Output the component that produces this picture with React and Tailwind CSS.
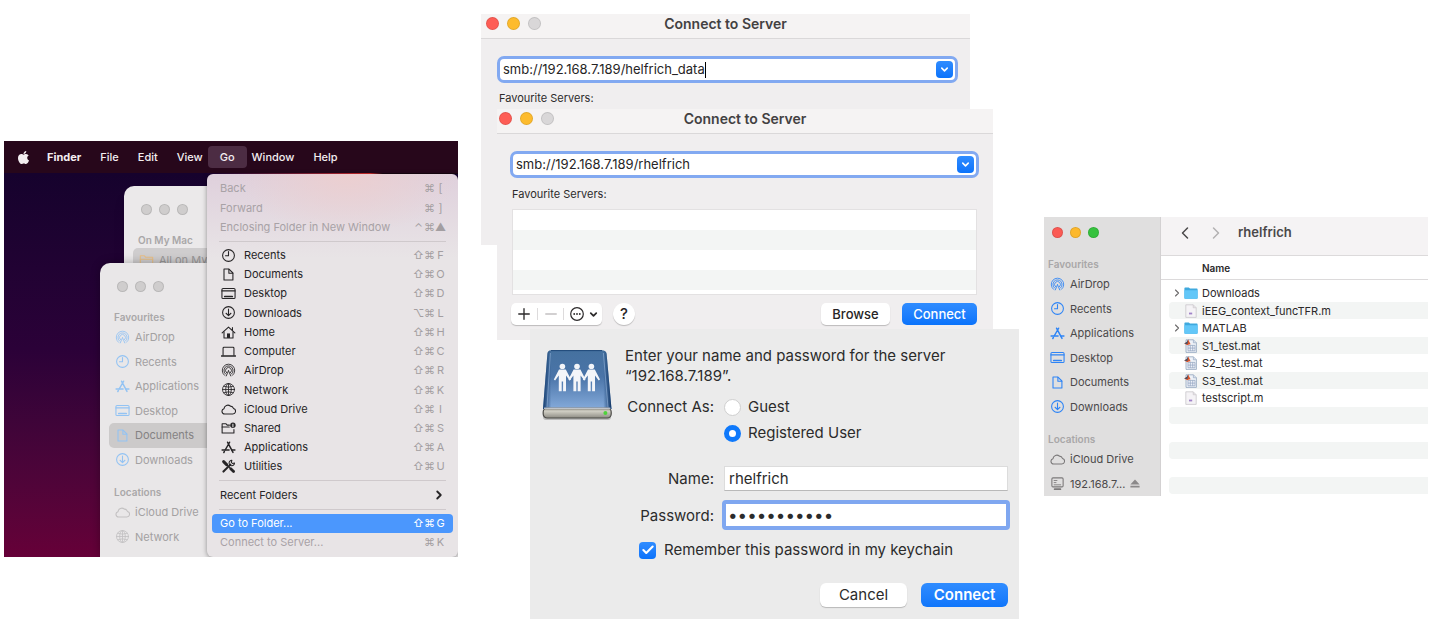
import React from "react";
import { FaApple } from "react-icons/fa";
import { ChevronDown, ChevronRight, ChevronLeft, Check, Plus, Minus } from "lucide-react";

const shapes = {
  recents: (
    <>
      <circle cx="8" cy="8" r="6.3" />
      <path d="M8 3.8V8.2H4.8" />
    </>
  ),
  documents: (
    <>
      <path d="M3.2 2.2h5.3l4.2 4.2v7.4H3.2z" />
      <path d="M8.4 2.4v4.2h4.2" />
    </>
  ),
  desktop: (
    <>
      <rect x="1" y="2.6" width="14" height="10.8" rx="1.2" />
      <path d="M1 5.2h14" />
      <path d="M4 11.2h8" strokeWidth="1.8" />
    </>
  ),
  downloads: (
    <>
      <circle cx="8" cy="8" r="6.3" />
      <path d="M8 4.4v6.8M5.4 8.8 8 11.3l2.6-2.5" />
    </>
  ),
  home: (
    <>
      <path d="M1.2 8.4 8 2.2l6.8 6.2M12.2 5.6V2.8" />
      <path d="M3.2 7.2v6.6h9.6V7.2" />
      <rect x="6.4" y="9" width="3.2" height="4.8" fill="currentColor" stroke="none" />
    </>
  ),
  computer: (
    <>
      <path d="M2.2 12V4.4q0-1 1-1h9.6q1 0 1 1V12" />
      <path d="M.4 12.8h15.2" strokeWidth="1.4" />
    </>
  ),
  airdrop: (
    <g strokeWidth=".9">
      <path d="M3.8 13.2a6.7 6.7 0 1 1 8.4 0" />
      <path d="M4.9 11.8a4.9 4.9 0 1 1 6.2 0" />
      <path d="M5.9 10.4a3.2 3.2 0 1 1 4.2 0" />
      <path d="m8 8.2-2.4 5.6M8 8.2l2.4 5.6" />
    </g>
  ),
  network: (
    <g strokeWidth=".9">
      <circle cx="8" cy="8" r="6.4" />
      <ellipse cx="8" cy="8" rx="3" ry="6.4" />
      <path d="M1.6 8h12.8M8 1.6v12.8M3 4.6q5 2 10 0M3 11.4q5-2 10 0" />
    </g>
  ),
  cloud: (
    <path d="M4 12.8h8.6a3 3 0 0 0 .7-5.9A3.5 3.5 0 0 0 10 4.4a4.1 4.1 0 0 0-6.8 2.7A2.9 2.9 0 0 0 4 12.8z" />
  ),
  shared: (
    <>
      <path d="M9 4.4H6.6L5.4 3H1.2v9.8h12.6V9" />
      <path d="M1.2 6.4h7.6" />
      <circle cx="12.7" cy="4.6" r="2.9" fill="currentColor" stroke="none" />
      <path d="M12.7 3.4v2.8" stroke="#fff" strokeWidth="1" />
    </>
  ),
  applications: (
    <>
      <path d="M7 2.4 8.2 4.6 12.8 13.2M9.2 2.4 4.6 10.4M3.6 12.2 3 13.4" strokeWidth="1.6" />
      <path d="M1.2 10.6h7.4M11.6 10.6h3.2" strokeWidth="1.6" />
    </>
  ),
  utilities: (
    <>
      <path d="M2.8 2.8 6 6" strokeWidth="3.2" />
      <path d="m6 6 4 4" strokeWidth="1.2" />
      <path d="m10.4 10.4 3 3" strokeWidth="3" />
      <path d="M2.6 13.4 10 6" strokeWidth="2.2" />
      <path d="M14.4 4.2a2.9 2.9 0 1 1-2.8-2.8L11 3.6l1.2 1.2z" strokeWidth="1.1" />
    </>
  ),
  folder: (
    <>
      <path d="M1.4 12.8V3h4.4l1.4 1.6h7.4v8.2z" />
      <path d="M1.4 6.6h13.2" />
    </>
  ),
  display: (
    <>
      <rect x="2" y="2" width="12" height="9.6" rx="1.2" />
      <path d="M5 14h6" strokeWidth="2" />
      <path d="M4.4 4.8h3M4.4 7h2M4.4 9.4h7" strokeWidth=".9" />
    </>
  ),
};

function Icon({ name, className = "" }) {
  return (
    <svg
      viewBox="0 0 16 16"
      fill="none"
      stroke="currentColor"
      strokeWidth="1.15"
      strokeLinejoin="round"
      strokeLinecap="round"
      aria-hidden="true"
      className={`shrink-0 ${className}`}
    >
      {shapes[name]}
    </svg>
  );
}

function Lights({ colors, dot = "size-[11px]", gap = "gap-[7px]" }) {
  return (
    <div className={`flex items-center ${gap}`}>
      {colors.map((c, i) => (
        <span key={i} className={`rounded-full border border-black/10 ${dot} ${c}`} />
      ))}
    </div>
  );
}

const grey3 = ["bg-[#cfcdcd]", "bg-[#cfcdcd]", "bg-[#cfcdcd]"];
const favourites = [
  ["airdrop", "AirDrop"],
  ["recents", "Recents"],
  ["applications", "Applications"],
  ["desktop", "Desktop"],
  ["documents", "Documents"],
  ["downloads", "Downloads"],
];

function SideItem({ icon, label, iconColor, textColor, selected, children }) {
  return (
    <li className="min-h-0">
      <a
        href="#"
        className={`flex h-full items-center gap-[5px] rounded-l-[5px] pl-[6px] text-[11px] ${textColor} ${selected ? "bg-[#cccaca]" : ""}`}
      >
        <Icon name={icon} className={`size-[15px] ${iconColor}`} />
        <span className="whitespace-nowrap">{label}</span>
        {children}
      </a>
    </li>
  );
}

function SideHeading({ children }) {
  return <h2 className="h-4 text-[10px] leading-4 font-semibold text-[#a9a7a8]">{children}</h2>;
}

const navRows = [
  ["recents", "Recents", "⇧⌘F"],
  ["documents", "Documents", "⇧⌘O"],
  ["desktop", "Desktop", "⇧⌘D"],
  ["downloads", "Downloads", "⌥⌘L"],
  ["home", "Home", "⇧⌘H"],
  ["computer", "Computer", "⇧⌘C"],
  ["airdrop", "AirDrop", "⇧⌘R"],
  ["network", "Network", "⇧⌘K"],
  ["cloud", "iCloud Drive", "⇧⌘I"],
  ["shared", "Shared", "⇧⌘S"],
  ["applications", "Applications", "⇧⌘A"],
  ["utilities", "Utilities", "⇧⌘U"],
];

function Keys({ keys }) {
  return (
    <span className="flex">
      {[...keys].map((k, i) => (
        <span key={i} className="flex w-[11px] justify-center">{k}</span>
      ))}
    </span>
  );
}

function MenuRow({ icon, label, keys, disabled, active, children }) {
  return (
    <button
      type="button"
      role="menuitem"
      disabled={disabled}
      className={`mx-[5px] flex min-h-0 flex-1 items-center rounded-[4px] pr-[7px] pl-2 text-left text-[11px] whitespace-nowrap ${
        active ? "bg-[#4b97fd] text-white" : disabled ? "text-[#a8a2a6]" : "text-[#262426]"
      }`}
    >
      {icon && <Icon name={icon} className="mr-2 ml-px size-[15px]" />}
      {label}
      {keys && (
        <span className={`ml-auto ${active ? "" : "text-[#a39ea1]"}`}>
          <Keys keys={keys} />
        </span>
      )}
      {children}
    </button>
  );
}

function MenuLine() {
  return (
    <div className="flex h-[9px] shrink-0 items-center px-3">
      <hr className="w-full border-[#cfc9cc]" />
    </div>
  );
}

function FinderMenu() {
  return (
    <section className="relative mt-[141px] flex h-[416px] flex-col overflow-hidden bg-linear-to-b from-[#12022b] via-[#2b0138] to-[#660038]">
      <nav className="flex h-8 shrink-0 items-center gap-px bg-[#27071b] pl-3 text-[11px] font-medium text-[#f3eef1]">
        <button type="button" aria-label="Apple menu" className="mr-[6px]">
          <FaApple className="size-[15px]" />
        </button>
        <button type="button" className="px-[9px] font-bold">Finder</button>
        <button type="button" className="px-[9px]">File</button>
        <button type="button" className="px-[9px]">Edit</button>
        <button type="button" className="px-[9px]">View</button>
        <button type="button" className="-mx-[5px] h-[22px] rounded-[4px] bg-[#4c2c43] px-3">Go</button>
        <button type="button" className="px-[9px]">Window</button>
        <button type="button" className="px-[9px]">Help</button>
      </nav>
      <div className="ml-[203px] h-px shrink-0 bg-linear-to-r from-[#1a0130] via-[#d92c2a] via-65% to-[#170510] to-70%" />

      <div className="absolute top-[45px] right-0 left-[120px] h-[120px] rounded-tl-[10px] bg-[#ebe9ea] pt-[18px] pl-[9px] shadow-lg">
        <div className="pl-2">
          <Lights colors={grey3} />
        </div>
        <h2 className="mt-[17px] h-4 pl-[5px] text-[10px] leading-4 font-semibold text-[#a9a7a8]">On My Mac</h2>
        <div className="flex h-[25px] items-center gap-[5px] rounded-l-[5px] bg-[#cfcdce] pl-[6px] text-[11px] text-[#989697]">
          <Icon name="folder" className="size-[15px] text-[#e9bf85]" />
          All on My Mac
        </div>
      </div>

      <div className="absolute top-[122px] right-0 bottom-0 left-[96px] rounded-tl-[10px] bg-[#e9e7e8] pl-[9px] shadow-[0_0_10px_rgba(0,0,0,0.3)]">
        <div className="flex h-[46px] items-center pl-2">
          <Lights colors={grey3} />
        </div>
        <div className="pl-[5px]">
          <SideHeading>Favourites</SideHeading>
        </div>
        <ul className="grid h-[147px] auto-rows-fr">
          {favourites.map(([icon, label]) => (
            <SideItem
              key={label}
              icon={icon}
              label={label}
              iconColor="text-[#93c3f3]"
              textColor={label === "Documents" ? "text-[#848283]" : "text-[#a3a1a2]"}
              selected={label === "Documents"}
            />
          ))}
        </ul>
        <div className="mt-3 pl-[5px]">
          <SideHeading>Locations</SideHeading>
        </div>
        <ul className="grid h-[49px] auto-rows-fr">
          <SideItem icon="cloud" label="iCloud Drive" iconColor="text-[#c3c1c2]" textColor="text-[#a3a1a2]" />
          <SideItem icon="network" label="Network" iconColor="text-[#c3c1c2]" textColor="text-[#a3a1a2]" />
        </ul>
      </div>

      <div
        role="menu"
        className="absolute top-[33px] right-0 bottom-0 left-[203px] flex flex-col rounded-[6px] bg-[#e8e4e6] bg-[radial-gradient(ellipse_110px_60px_at_56%_0,#eccfd0,transparent),linear-gradient(to_bottom,#dfd0dc,#e8e4e6_22%)] pt-[5px] pb-[5px] shadow-[0_1px_5px_rgba(0,0,0,0.4)]"
      >
        <MenuRow label="Back" keys="⌘[" disabled />
        <MenuRow label="Forward" keys="⌘]" disabled />
        <MenuRow label="Enclosing Folder in New Window" keys="⌃⌘▲" disabled />
        <MenuLine />
        {navRows.map(([icon, label, keys]) => (
          <MenuRow key={label} icon={icon} label={label} keys={keys} />
        ))}
        <MenuLine />
        <MenuRow label="Recent Folders">
          <ChevronRight className="ml-auto size-[14px]" strokeWidth={3.2} />
        </MenuRow>
        <MenuLine />
        <MenuRow label="Go to Folder..." keys="⇧⌘G" active />
        <MenuRow label="Connect to Server..." keys="⌘K" disabled />
      </div>
    </section>
  );
}

const server3 = ["bg-[#fe5d55]", "bg-[#fdbb2d]", "bg-[#d9d7d8]"];

function ServerBar({ inset }) {
  return (
    <header className={`relative flex h-[25px] items-center border-b border-[#dad8d9] bg-[#f5f3f3] pb-[5px] ${inset}`}>
      <Lights colors={server3} dot="size-[13px]" gap="gap-2" />
      <h1 className="absolute inset-x-0 text-center text-[14px] leading-4 font-semibold text-[#434142]">Connect to Server</h1>
    </header>
  );
}

function AddressField({ id, value, caret }) {
  return (
    <div className="flex h-[27px] items-center rounded-[7px] border-[3px] border-[#82a9f1] bg-white pr-[2px] pl-[3px]">
      <div className="flex min-w-0 flex-1 items-center">
        <input
          id={id}
          defaultValue={value}
          className={`min-w-0 bg-transparent text-[13px] text-[#262425] outline-none ${caret ? "field-sizing-content" : "w-full"}`}
        />
        {caret && <span className="h-4 w-px bg-black" />}
      </div>
      <button
        type="button"
        aria-label="Recent servers"
        className="flex size-[17px] items-center justify-center rounded-[4px] bg-linear-to-b from-[#2f8cff] to-[#0a73fb] text-white"
      >
        <ChevronDown className="size-[11px]" strokeWidth={3.4} />
      </button>
    </div>
  );
}

function ServerIcon() {
  const person = (x) => (
    <g key={x} transform={`translate(${x} 0)`}>
      <ellipse cx="0" cy="18.4" rx="2.8" ry="2.6" />
      <path d="M-3.4 21.6h6.8l5.2 9.8-1.3 1.2-3.7-5v15.6H.7V33.4H-.7v9.8H-3.6V27.6l-3.7 5-1.3-1.2z" />
    </g>
  );
  return (
    <svg viewBox="0 0 72 76" className="h-[76px] w-[72px]" aria-hidden="true">
      <defs>
        <linearGradient id="cover" x1="0" y1="0" x2="0" y2="1">
          <stop offset="0" stopColor="#45719f" />
          <stop offset=".45" stopColor="#4a74a8" />
          <stop offset="1" stopColor="#84aada" />
        </linearGradient>
        <linearGradient id="edge" x1="0" y1="0" x2="1" y2="0">
          <stop offset="0" stopColor="#123a6b" />
          <stop offset=".12" stopColor="#123a6b" stopOpacity="0" />
          <stop offset=".88" stopColor="#123a6b" stopOpacity="0" />
          <stop offset="1" stopColor="#0b2f5e" />
        </linearGradient>
        <linearGradient id="base" x1="0" y1="0" x2="0" y2="1">
          <stop offset="0" stopColor="#77756c" />
          <stop offset=".3" stopColor="#d2d0c6" />
          <stop offset="1" stopColor="#8e8c84" />
        </linearGradient>
      </defs>
      <rect x="2" y="66" width="68" height="6" rx="3" fill="#000" opacity=".2" />
      <path d="M10 2.2h51q4 0 4.6 3.6L70.5 61H2L6.4 5.8q.4-3.6 3.6-3.6z" fill="url(#cover)" />
      <path d="M10 2.2h51q4 0 4.6 3.6L70.5 61H2L6.4 5.8q.4-3.6 3.6-3.6z" fill="url(#edge)" />
      <path d="M10 2.6h51" stroke="#1d4778" strokeWidth="1" />
      <path d="M9.4 5 6 59.6M62.4 5l4.6 54.6" stroke="#9dbbe0" strokeWidth=".8" opacity=".7" />
      <rect x="2.2" y="60" width="68" height="10" rx="4" fill="url(#base)" stroke="#4b4a47" strokeWidth="1.2" />
      <path d="M3 60.2h66.4" stroke="#e6eefa" strokeWidth="1" />
      <circle cx="64.4" cy="65" r="2" fill="#4fd33b" />
      <g fill="#f3f5f9">{[21.4, 36, 50.4].map(person)}</g>
    </svg>
  );
}

function ServerWindows() {
  return (
    <section className="mt-[14px]">
      <div className="mr-[49px] h-[231px] bg-[#f0eeef]">
        <ServerBar inset="pl-[5px]" />
        <div className="flex flex-col pt-[17px] pr-3 pl-4">
          <AddressField id="server-a" value="smb://192.168.7.189/helfrich_data" caret />
          <label htmlFor="server-a" className="mt-[7px] pl-[2px] text-[11px] leading-4 text-[#2c2a2b]">Favourite Servers:</label>
        </div>
      </div>

      <div className="relative mr-[26px] -mt-[136px] ml-4 h-[231px] bg-[#f0eeef]">
        <ServerBar inset="pl-[2px]" />
        <div className="flex flex-col pt-[17px] pr-[14px] pl-[13px]">
          <AddressField id="server-b" value="smb://192.168.7.189/rhelfrich" />
          <label htmlFor="server-b" className="mt-2 pl-[2px] text-[11px] leading-4 text-[#2c2a2b]">Favourite Servers:</label>
        </div>
        <div className="mt-[7px] mr-4 ml-[15px] h-[86px] border border-[#e3e1e2] bg-[repeating-linear-gradient(to_bottom,#ffffff_0_20px,#f3f5f4_20px_40px)]" />
        <div className="mt-2 mr-4 ml-[14px] flex h-[22px] items-center">
          <div className="flex h-[22px] items-center rounded-[5px] bg-white text-[#2c2a2b] shadow-[0_1px_1px_rgba(0,0,0,0.22)]">
            <button type="button" aria-label="Add server" className="flex w-[26px] justify-center">
              <Plus className="size-[18px]" strokeWidth={1.8} />
            </button>
            <span className="h-3 w-px bg-[#dddbdc]" />
            <button type="button" aria-label="Remove server" className="flex w-[25px] justify-center text-[#c3c1c2]">
              <Minus className="size-[18px]" strokeWidth={1.8} />
            </button>
            <span className="h-3 w-px bg-[#dddbdc]" />
            <button type="button" aria-label="Server options" className="flex items-center gap-1 pr-[3px] pl-[6px]">
              <svg viewBox="0 0 14 14" className="size-[14px]" fill="currentColor" aria-hidden="true">
                <circle cx="7" cy="7" r="6.3" fill="none" stroke="currentColor" strokeWidth="1.2" />
                <circle cx="4.2" cy="7" r=".9" />
                <circle cx="7" cy="7" r=".9" />
                <circle cx="9.8" cy="7" r=".9" />
              </svg>
              <ChevronDown className="size-[11px]" strokeWidth={3.8} />
            </button>
          </div>
          <button type="button" aria-label="Help" className="ml-[11px] size-[22px] rounded-full bg-white text-[15px] leading-[22px] font-medium text-[#262425] shadow-[0_1px_1px_rgba(0,0,0,0.22)]">
            ?
          </button>
          <button type="button" className="ml-auto h-[22px] w-[69px] rounded-[5px] bg-white text-[13px] leading-5 font-medium text-[#262425] shadow-[0_1px_1px_rgba(0,0,0,0.22)]">
            Browse
          </button>
          <button type="button" className="ml-3 h-[22px] w-[75px] rounded-[5px] bg-linear-to-b from-[#2f8cff] to-[#0a73fb] text-[13px] leading-5 font-medium text-white">
            Connect
          </button>
        </div>
      </div>

      <form className="relative -mt-[11px] ml-[49px] flex h-[290px] bg-[#ebebeb] pt-[17px] pr-[11px] pl-[11px] text-[15px] text-[#2b2b2b]">
        <div className="pt-[2px]">
          <ServerIcon />
        </div>
        <div className="min-w-0 flex-1 pl-3">
          <p className="leading-5">
            Enter your name and password for the server
            <br />
            “192.168.7.189”.
          </p>
          <fieldset className="mt-2 flex gap-[10px]">
            <legend className="float-left w-[89px] text-right leading-[26px]">Connect As:</legend>
            <div className="flex flex-col">
              <label className="flex h-[26px] items-center gap-[7px]">
                <input type="radio" name="connect-as" className="size-[17px] appearance-none rounded-full border border-[#cfcfcf] bg-white checked:border-[5px] checked:border-[#0f79fb]" />
                Guest
              </label>
              <label className="flex h-[26px] items-center gap-[7px]">
                <input type="radio" name="connect-as" defaultChecked className="size-[17px] appearance-none rounded-full border border-[#cfcfcf] bg-white checked:border-[5px] checked:border-[#0f79fb]" />
                Registered User
              </label>
            </div>
          </fieldset>
          <div className="mt-5 flex items-center gap-[10px]">
            <label htmlFor="account" className="w-[89px] text-right leading-[25px]">Name:</label>
            <input id="account" defaultValue="rhelfrich" className="h-[25px] min-w-0 flex-1 border border-b-[#b9b9b9] border-[#dcdcdc] bg-white px-1 outline-none" />
          </div>
          <div className="mt-[9px] -mr-[2px] flex items-center gap-2">
            <label htmlFor="secret" className="w-[89px] text-right leading-[25px]">Password:</label>
            <input id="secret" type="password" defaultValue="•••••••••••" className="h-[30px] min-w-0 flex-1 rounded-[4px] border-4 border-[#7fa7f0] bg-white px-[2px] text-[17px] outline-none" />
          </div>
          <label className="mt-[9px] ml-[14px] flex h-[22px] items-center gap-2">
            <span className="relative flex size-[17px] items-center justify-center">
              <input type="checkbox" defaultChecked className="size-[17px] appearance-none rounded-[4px] bg-linear-to-b from-[#2f8cff] to-[#0a73fb]" />
              <Check className="pointer-events-none absolute size-[14px] text-white" strokeWidth={3.6} />
            </span>
            Remember this password in my keychain
          </label>
          <div className="mt-[22px] flex justify-end gap-[14px]">
            <button type="button" className="h-6 w-[87px] rounded-[6px] bg-white leading-6 shadow-[0_1px_1px_rgba(0,0,0,0.22)]">Cancel</button>
            <button type="button" className="h-6 w-[87px] rounded-[6px] bg-linear-to-b from-[#2f8cff] to-[#0f76fb] leading-6 font-semibold text-white">Connect</button>
          </div>
        </div>
      </form>
    </section>
  );
}

const files = [
  ["folder", "Downloads"],
  ["m", "iEEG_context_funcTFR.m"],
  ["folder", "MATLAB"],
  ["mat", "S1_test.mat"],
  ["mat", "S2_test.mat"],
  ["mat", "S3_test.mat"],
  ["m", "testscript.m"],
  [], [], [], [], [],
];

function FileIcon({ kind }) {
  if (kind === "folder")
    return (
      <svg viewBox="0 0 14 14" className="size-[14px]" aria-hidden="true">
        <path d="M.4 2.2q0-.8.8-.8h3.6l1.2 1h6.8q.8 0 .8.8V12q0 .8-.8.8H1.2Q.4 12.8.4 12z" fill="#3fa9de" />
        <path d="M.4 4.2h13.2V12q0 .8-.8.8H1.2Q.4 12.8.4 12z" fill="#63c7f8" />
      </svg>
    );
  if (kind === "m")
    return (
      <svg viewBox="0 0 14 14" className="size-[14px]" aria-hidden="true">
        <path d="M1.8.8h7.4l3 3v9.6H1.8z" fill="#f5f3f6" stroke="#c9c6ca" strokeWidth=".8" />
        <path d="M9.2.8v3h3" fill="#e2e0e3" stroke="#c9c6ca" strokeWidth=".6" />
        <rect x="5" y="8.6" width="3.2" height="1.8" fill="#a184c9" />
      </svg>
    );
  return (
    <svg viewBox="0 0 14 14" className="size-[14px]" aria-hidden="true">
      <path d="M2 .8h7.4l3 3v9.6H2z" fill="#eef2f8" stroke="#91a3bd" strokeWidth=".8" />
      <path d="M9.4.8v3h3" fill="#d4dde9" stroke="#91a3bd" strokeWidth=".6" />
      <path d="M4 6.4h7v5.4H4zM4 9.1h7M6.3 6.4v5.4M8.7 6.4v5.4" fill="none" stroke="#8fa2bf" strokeWidth=".7" />
      <path d="M.2 4.4 2.8 3 4.2.6l2.4 4.6-1.8.2-1.4.8z" fill="#d9542b" />
      <path d="M.2 4.4 2.8 3 4.2.6 3.4 5z" fill="#32506e" />
    </svg>
  );
}

function FinderWindow() {
  return (
    <section className="mt-[217px] flex h-[279px] overflow-hidden pl-[2px]">
      <aside className="w-[117px] shrink-0 border-r border-[#d3d1d2] bg-[#e0dfdf]">
        <div className="flex h-[39px] items-start pt-[10px] pl-2">
          <Lights colors={["bg-[#fb5a54]", "bg-[#fcb82c]", "bg-[#36c23e]"]} />
        </div>
        <div className="pl-1">
          <SideHeading>Favourites</SideHeading>
        </div>
        <ul className="grid h-[147px] auto-rows-fr">
          {favourites.map(([icon, label]) => (
            <SideItem key={label} icon={icon} label={label} iconColor="text-[#2d84f6]" textColor="text-[#4b494a]" />
          ))}
        </ul>
        <div className="mt-3 pl-1">
          <SideHeading>Locations</SideHeading>
        </div>
        <ul className="grid h-[49px] auto-rows-fr">
          <SideItem icon="cloud" label="iCloud Drive" iconColor="text-[#7b797a]" textColor="text-[#4b494a]" />
          <SideItem icon="display" label="192.168.7..." iconColor="text-[#7b797a]" textColor="text-[#4b494a]">
            <svg viewBox="0 0 10 9" className="h-[9px] w-[10px]" fill="#8b898a" aria-label="Eject">
              <path d="M5 .4 9.6 5.6H.4zM.4 6.8h9.2v1.6H.4z" />
            </svg>
          </SideItem>
        </ul>
      </aside>
      <div className="min-w-0 flex-1 bg-white">
        <header className="flex h-[39px] items-center border-b border-[#dcdadb] bg-[#f5f3f4] pb-[7px] pl-[14px] text-[#4a4849]">
          <button type="button" aria-label="Back">
            <ChevronLeft className="size-5" strokeWidth={1.8} />
          </button>
          <button type="button" aria-label="Forward" className="ml-[11px] text-[#b3b1b2]">
            <ChevronRight className="size-5" strokeWidth={1.8} />
          </button>
          <h1 className="ml-3 text-[13px] font-semibold">rhelfrich</h1>
        </header>
        <table aria-label="Files" className="w-full border-separate border-spacing-0 text-[11px] leading-4 text-[#2b292a]">
          <thead>
            <tr>
              <th colSpan={2} className="h-6 border-b border-[#dcdadb] p-0 pl-[41px] text-left text-[10px] leading-4 font-semibold">Name</th>
            </tr>
          </thead>
          <tbody className="before:block before:h-1">
            {files.map(([kind, name], i) => (
              <tr key={i}>
                <td className="w-2 p-0" />
                <td className={`rounded-l-[4px] p-0 ${i % 2 ? "h-[17px] bg-[#f3f5f4]" : "h-[18px]"}`}>
                  {name && (
                    <div className="flex items-center gap-1 pl-[2px]">
                      {kind === "folder" ? (
                        <button type="button" aria-label={`Expand ${name}`} className="-mr-[3px] text-[#6b696a]">
                          <ChevronRight className="size-3" strokeWidth={2.2} />
                        </button>
                      ) : (
                        <span className="-mr-[3px] w-3" />
                      )}
                      <FileIcon kind={kind} />
                      {name}
                    </div>
                  )}
                </td>
              </tr>
            ))}
          </tbody>
        </table>
      </div>
    </section>
  );
}

export default function App() {
  return (
    <main className="grid min-h-screen grid-cols-[454fr_538fr_386fr] items-start gap-x-[23px] bg-white pr-[6px] pl-1 font-['Inter','Noto_Sans',sans-serif]">
      <FinderMenu />
      <ServerWindows />
      <FinderWindow />
    </main>
  );
}
